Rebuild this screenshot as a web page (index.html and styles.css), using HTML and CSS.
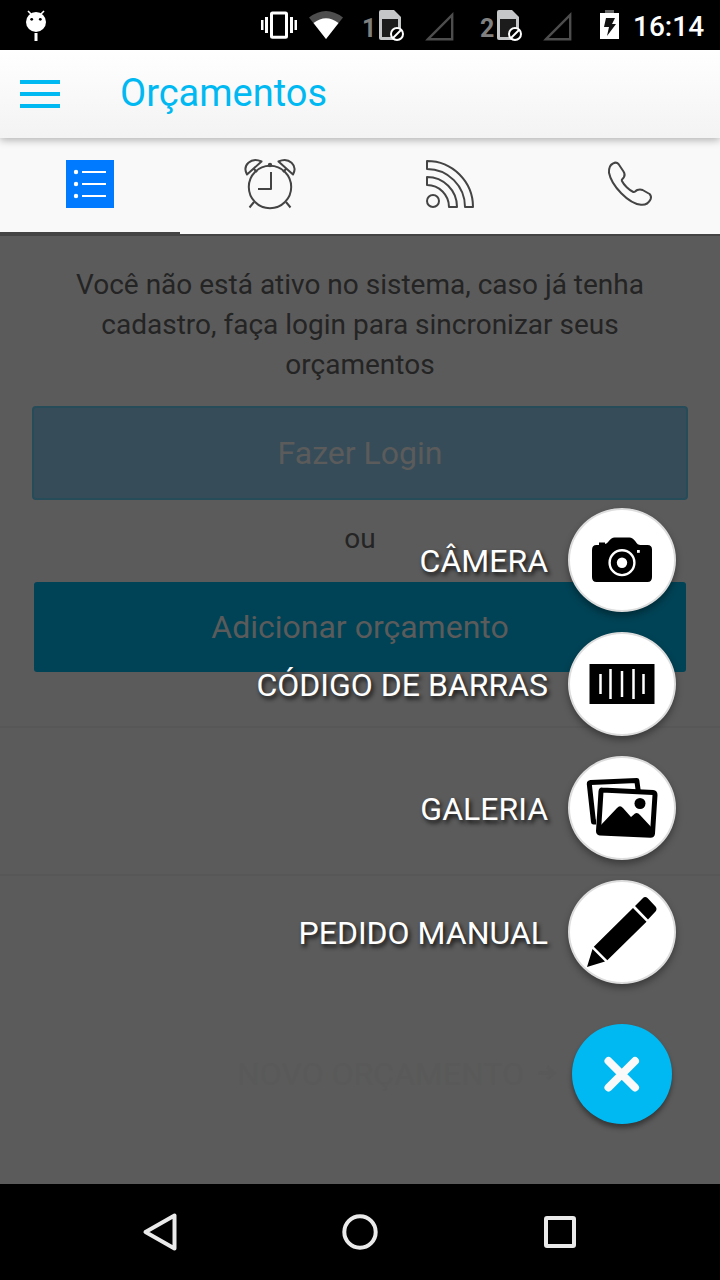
FILE: index.html
```html
<!DOCTYPE html>
<html lang="pt-BR">
<head>
<meta charset="utf-8">
<title>Orçamentos</title>
<link rel="stylesheet" href="styles.css">
</head>
<body>
<div class="screen">
  <div class="status-bar">
    <svg class="status-icons" width="620" height="50" viewBox="0 0 620 50">
      <g fill="#fff"><circle cx="36" cy="22" r="10"/><path d="M34.5 33h3v8h-3z"/><path d="M28 11l4 4M44 11l-4 4" stroke="#fff" stroke-width="1.6"/></g>
      <circle cx="31.7" cy="19.3" r="1.4"/><circle cx="40.3" cy="19.3" r="1.4"/>
      <rect x="271.5" y="13" width="15" height="24.300" rx="1" fill="none" stroke="#fff" stroke-width="3"/>
      <path d="M261 20h2.500v10H261zM265 17h3v16h-3zM290 17h3v16h-3zM294.500 20h2.500v10h-2.500z" fill="#fff"/>
      <path d="M309 17.500Q326 4.500 343 17.500L326 39z" fill="#4d4d4d"/>
      <path d="M313.500 23Q326 13.500 338.500 23L326 39z" fill="#fff"/>
      <g id="sim"><path d="M381 10h13l7 7v21q0 2-2 2h-18q-2 0-2-2V12q0-2 2-2z" fill="#c5c6c7"/><path d="M382 19h16v18h-16z" fill="#1c1c1c"/><circle cx="397" cy="34" r="6" fill="#000" stroke="#fff" stroke-width="2"/><path d="M393 38l8-8" stroke="#fff" stroke-width="2"/></g>
      <use href="#sim" x="118"/>
      <path d="M428 39.200L452.200 15v24.200zM546 39.200L570.200 15v24.200z" fill="none" stroke="#4d4d4d" stroke-width="2.400"/>
      <path d="M605 10h9v4h-9z" fill="#666"/><path d="M600 13h19v26h-19z" fill="#fff"/><path d="M606 18h9l-3 6h4l-9 12 2-9h-5z" fill="#111"/>
      <text class="sim-number" x="362" y="36.500">1</text><text class="sim-number" x="480" y="36.500">2</text>
    </svg>
    <span class="clock">16:14</span>
  </div>

  <header class="app-bar">
    <span class="menu"><i></i><i></i><i></i></span>
    <h1 class="title">Orçamentos</h1>
  </header>

  <nav class="tabs">
    <span class="tab tab-active">
      <svg width="48" height="48" viewBox="0 0 48 48"><path fill="#007aff" d="M0 0h48v48H0z"/><g fill="#fff"><circle cx="10" cy="12" r="2.200"/><circle cx="10" cy="24" r="2.200"/><circle cx="10" cy="36" r="2.200"/><path d="M16 11h24v2H16zM16 23h24v2H16zM16 35h24v2H16z"/></g></svg>
    </span>
    <span class="tab">
      <svg class="line-icon" width="52" height="52" viewBox="244 158 52 52"><circle cx="270" cy="187" r="21.200"/><path d="M271 172v17h-13M254 202l-4.500 5.500M286 202l4.500 5.500M247 174.500c-5-9 4-18 14.500-13zM293 174.500c5-9-4-18-14.500-13zM254 169l3 3M286 169l-3 3"/><circle cx="270" cy="165" r="1.200" fill="#444"/></svg>
    </span>
    <span class="tab">
      <svg class="line-icon" width="48" height="48" viewBox="0 0 48 48"><circle cx="7" cy="41" r="6"/><path d="M1 1A46 46 0 0 1 47 47H39A38 38 0 0 0 1 9zM1 17A30 30 0 0 1 31 47H23A22 22 0 0 0 1 25z"/></svg>
    </span>
    <span class="tab">
      <svg class="line-icon" width="48" height="48" viewBox="606 160 48 48"><path d="M613 163.500c2-1.200 4-1.200 5.500.5l5 7.500q2 3 .5 5.500c-1.200 2-2.700 2.200-2.200 3.800 2 4.200 7.300 9.200 11.500 11.200 1.700.6 2-1.200 4-2q2.700-1 5.300 0l7 4q2.200 2.200 1 5.200c-2 4-5.600 6-9.600 5.600-12.500-1-29.500-19-32-32q-.5-7 4-9.300z"/></svg>
    </span>
  </nav>

  <main class="content">
    <p class="message">Você não está ativo no sistema, caso já tenha cadastro, faça login para sincronizar seus orçamentos</p>
    <div class="button button-login">Fazer Login</div>
    <p class="or">ou</p>
    <div class="button button-add">Adicionar orçamento</div>
    <div class="row row-short"></div>
    <div class="row"></div>
    <div class="hint">NOVO ORÇAMENTO <svg width="22" height="20" viewBox="0 0 22 20"><path d="M2 9h14M11 3l7 6-7 6" fill="none" stroke="#595959" stroke-width="3"/></svg></div>

    <div class="actions">
      <div class="action"><span>CÂMERA</span>
        <div class="bubble"><svg width="72" height="72" viewBox="586 524 72 72"><path d="M599 545v-2.500h6v1.500q2-.5 3.500-2.500 3-4 6-4h15q3 0 6 4 2 3.500 5 3.500h7q4.500 0 4.500 4.500V577q0 5-4.500 5h-51q-4.500 0-4.500-5v-27q0-5 4.500-5z"/><circle cx="622" cy="562.700" r="12.400" fill="none" stroke="#fff" stroke-width="2.400"/><circle cx="622" cy="562.700" r="5.200" fill="#fff"/><path d="M637 550h2.800v2.800H637z" fill="#fff"/></svg></div></div>
      <div class="action"><span>CÓDIGO DE BARRAS</span>
        <div class="bubble"><svg width="72" height="72" viewBox="586 648 72 72"><path d="M589.500 664h65v40h-65z"/><path d="M600.500 674v20M610.500 669v30M622 671v26M633.500 669v30M643.500 674v20" stroke="#fff" stroke-width="2.500"/></svg></div></div>
      <div class="action"><span>GALERIA</span>
        <div class="bubble"><svg width="72" height="72" viewBox="586 772 72 72"><path d="M596 822l-2.500 0-4.200-38q0-1.200 1.500-1.400l46-2.200 1.500 11" fill="none" stroke="#000" stroke-width="5" stroke-linejoin="round"/><path d="M602 790l51 2.500q2 .2 2 2.500l-2.500 38.500q-.2 1.700-2 1.700l-50.500-2.200q-1.500-.2-1.500-2l2.500-39.500q.2-1.600 1-1.500z" fill="#fff" stroke="#000" stroke-width="5"/><circle cx="640" cy="803.500" r="5.500"/><path d="M600 826l17-18q3-3.500 6 0l8 9 4-3.500q2.500-1.500 5 1.500l13 14-1 6-52-2z"/></svg></div></div>
      <div class="action"><span>PEDIDO MANUAL</span>
        <div class="bubble"><svg width="72" height="72" viewBox="586 896 72 72"><path d="M633 908l13.500 13.700-39.200 38.500-13.500-13.500zM635 906l7.500-7.500q2.500-2.500 5-.5l8 8.500q2 2.500 0 5l-7.500 8zM592.500 949l12.500 12.500-18 5.500z"/></svg></div></div>
      <div class="fab"><svg width="40" height="40" viewBox="0 0 40 40"><path d="M6.500 7l26.500 26.500M33 7L6.500 33.500" fill="none" stroke="#f9f9f9" stroke-width="8" stroke-linecap="round"/></svg></div>
    </div>
  </main>

  <footer class="system-nav">
    <svg width="40" height="40" viewBox="140 1212 40 40"><path d="M145.500 1232L174.500 1215.500v33z"/></svg>
    <svg width="40" height="40" viewBox="0 0 40 40"><circle cx="20" cy="20" r="15.700"/></svg>
    <svg width="40" height="40" viewBox="0 0 40 40"><rect x="6" y="6" width="28" height="28" rx="1"/></svg>
  </footer>
</div>
</body>
</html>
```
FILE: styles.css
```css
* { box-sizing: border-box; }
body { margin: 0; font-family: Roboto, sans-serif; }
svg { display: block; flex: none; }
.screen { width: 720px; height: 1280px; display: flex; flex-direction: column; overflow: hidden; background: #000; }
.status-bar { height: 50px; flex: none; display: flex; align-items: center; background: #000; color: #fff; }
.clock { margin-left: 13px; font-size: 28px; line-height: 50px; font-weight: 500; padding-top: 3px; }
.sim-number { font: 700 25px Roboto, sans-serif; fill: #808080; }
.app-bar { height: 88px; flex: none; display: flex; align-items: center; gap: 60px; padding-left: 20px; background: linear-gradient(#fff, #f3f3f3); box-shadow: 0 2px 8px rgba(0,0,0,.3); position: relative; z-index: 2; }
.menu { width: 40px; display: grid; gap: 8px; }
.menu i { height: 4px; background: #00b9f2; }
.title { margin: 0; font-size: 38px; line-height: 48px; font-weight: 400; color: #00b9f2; padding-bottom: 2px; }
.tabs { height: 96px; flex: none; display: grid; grid-template-columns: repeat(4, 1fr); background: #f9f9f9; }
.tab { display: flex; align-items: center; justify-content: center; padding-bottom: 4px; }
.tab-active { border-bottom: 2px solid #444; padding-bottom: 2px; }
.line-icon { fill: none; stroke: #444; stroke-width: 2; stroke-linejoin: round; }
.content { height: 950px; flex: none; position: relative; background: #5b5b5b; border-top: 2px solid #444; padding-top: 29px; text-align: center; }
.message { margin: 0 60px 21px; font-size: 28px; line-height: 40px; color: #242424; }
.button { display: flex; align-items: center; justify-content: center; font-size: 32px; color: #5b5b5b; }
.button-login { height: 94px; margin: 0 32px; border: 2px solid #264c5a; border-radius: 4px; background: #364d59; }
.or { margin: 19px 0 23px; font-size: 28px; line-height: 40px; color: #242424; }
.button-add { height: 90px; margin: 0 34px; border-radius: 3px; background: #004356; }
.row { height: 148px; border-bottom: 2px solid #575757; }
.row-short { height: 56px; }
.hint { display: flex; align-items: center; gap: 12px; padding: 178px 0 0 237px; font-size: 32px; line-height: 40px; color: #595959; }
.actions { position: absolute; right: 44px; top: 272px; display: flex; flex-direction: column; align-items: flex-end; gap: 20px; }
.action { display: flex; align-items: center; gap: 20px; color: #fff; font-size: 32px; line-height: 40px; text-shadow: 2px 3px 4px #111; }
.action span { padding-top: 2px; }
.bubble { width: 108px; height: 104px; border: 2px solid #ddd; border-radius: 50%; background: #fff; box-shadow: 0 4px 7px rgba(0,0,0,.35); display: flex; align-items: center; justify-content: center; }
.fab { width: 100px; height: 100px; margin: 20px 4px 0 0; border-radius: 50%; background: #00b9f2; box-shadow: 0 4px 5px rgba(0,0,0,.4); display: flex; align-items: center; justify-content: center; }
.system-nav { height: 96px; flex: none; display: flex; align-items: center; justify-content: center; gap: 160px; background: #000; }
.system-nav svg { fill: none; stroke: #eaeaea; stroke-width: 4; stroke-linejoin: round; }
```
